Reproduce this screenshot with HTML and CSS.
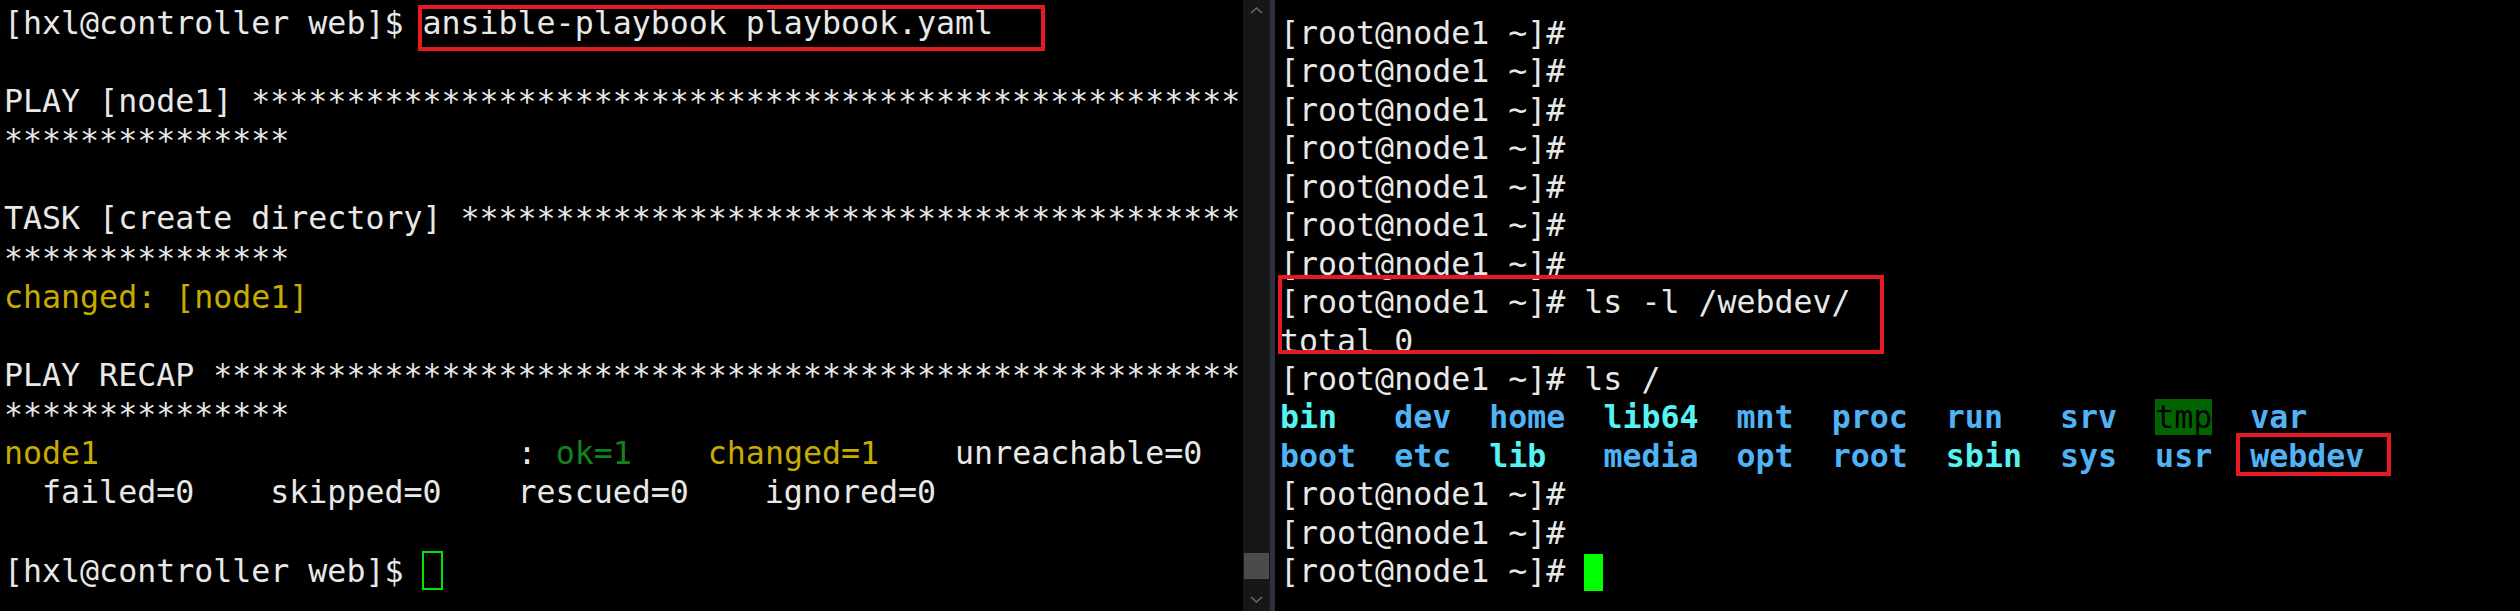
FILE: index.html
```html
<!DOCTYPE html>
<html>
<head>
<meta charset="utf-8">
<link rel="stylesheet" href="styles.css">
</head>
<body>
<div class="screen">
  <div class="pane left">
    <div class="ln">[hxl@controller web]$ ansible-playbook playbook.yaml</div>
    <div class="ln"> </div>
    <div class="ln">PLAY [node1] ****************************************************</div>
    <div class="ln">***************</div>
    <div class="ln"> </div>
    <div class="ln">TASK [create directory] *****************************************</div>
    <div class="ln">***************</div>
    <div class="ln y">changed: [node1]</div>
    <div class="ln"> </div>
    <div class="ln">PLAY RECAP ******************************************************</div>
    <div class="ln">***************</div>
    <div class="ln"><span class="y">node1</span>                      : <span class="g">ok=1</span>    <span class="y">changed=1</span>    unreachable=0</div>
    <div class="ln">  failed=0    skipped=0    rescued=0    ignored=0</div>
    <div class="ln"> </div>
    <div class="ln">[hxl@controller web]$ <span class="cur-out"></span></div>
    <div class="mark m1"></div>
  </div>
  <div class="scroll">
    <svg class="arr" width="27" height="20" viewBox="0 0 27 20"><path d="M8 13 L13.5 8 L19 13" fill="none" stroke="#6a6a6a" stroke-width="1.6"/></svg>
    <div class="track"></div>
    <div class="thumb"></div>
    <svg class="arr" width="27" height="22" viewBox="0 0 27 22"><path d="M8 8 L13.5 13 L19 8" fill="none" stroke="#6a6a6a" stroke-width="1.6"/></svg>
  </div>
  <div class="divider"></div>
  <div class="pane right">
    <div class="ln">[root@node1 ~]#</div>
    <div class="ln">[root@node1 ~]#</div>
    <div class="ln">[root@node1 ~]#</div>
    <div class="ln">[root@node1 ~]#</div>
    <div class="ln">[root@node1 ~]#</div>
    <div class="ln">[root@node1 ~]#</div>
    <div class="ln">[root@node1 ~]#</div>
    <div class="ln">[root@node1 ~]# ls -l /webdev/</div>
    <div class="ln">total 0</div>
    <div class="ln">[root@node1 ~]# ls /</div>
    <div class="ln b"><span class="c">bin</span>   <span class="bl">dev</span>  <span class="bl">home</span>  <span class="c">lib64</span>  <span class="bl">mnt</span>  <span class="bl">proc</span>  <span class="bl">run</span>   <span class="bl">srv</span>  <span class="tmp">tmp</span>  <span class="bl">var</span></div>
    <div class="ln b"><span class="bl">boot</span>  <span class="bl">etc</span>  <span class="c">lib</span>   <span class="bl">media</span>  <span class="bl">opt</span>  <span class="bl">root</span>  <span class="c">sbin</span>  <span class="bl">sys</span>  <span class="bl">usr</span>  <span class="bl">webdev</span></div>
    <div class="ln">[root@node1 ~]#</div>
    <div class="ln">[root@node1 ~]#</div>
    <div class="ln">[root@node1 ~]# <span class="cur-in"></span></div>
    <div class="mark m2"></div>
    <div class="mark m3"></div>
  </div>
</div>
</body>
</html>
```

FILE: styles.css
```css
html, body {
  margin: 0;
  padding: 0;
  background: #000;
}
.screen {
  width: 2520px;
  height: 611px;
  display: flex;
  overflow: hidden;
  background: #000;
}
.pane {
  position: relative;
  font-family: "DejaVu Sans Mono", monospace;
  font-size: 31.6px;
  color: #e8e8e8;
  box-sizing: border-box;
}
.ln {
  white-space: pre;
}
.left {
  width: 1243px;
  padding: 4px 0 0 4px;
}
.left .ln {
  height: 39.1px;
  line-height: 39.1px;
}
.right {
  flex: 1;
  padding: 14px 0 0 5px;
}
.right .ln {
  height: 38.45px;
  line-height: 38.45px;
}
.y { color: #c6ab00; }
.g { color: #13821a; }
.b { font-weight: bold; }
.c { color: #56f3f3; }
.bl { color: #4fb3f5; }
.tmp {
  background: #006400;
  color: #000;
  font-weight: normal;
}
.cur-out {
  display: inline-block;
  width: 17px;
  height: 35px;
  border: 2px solid #00e600;
  vertical-align: -8px;
}
.cur-in {
  display: inline-block;
  width: 19px;
  height: 37px;
  background: #00ff00;
  vertical-align: -9px;
}
.scroll {
  width: 27px;
  background: #171717;
  display: flex;
  flex-direction: column;
}
.scroll .arr { display: block; flex: none; }
.scroll .track { flex: 1; }
.scroll .thumb {
  height: 26px;
  margin: 0 1px 10px 1px;
  background: #4b4b4b;
  flex: none;
}
.divider {
  width: 5px;
  background: #2c313b;
}
.mark {
  position: absolute;
  border: 4px solid #e51a22;
  box-sizing: border-box;
}
.m1 { left: 418px; top: 5px; width: 627px; height: 46px; }
.m2 { left: 3px; top: 275px; width: 606px; height: 79px; }
.m3 { left: 961px; top: 433px; width: 155px; height: 43px; }
```
